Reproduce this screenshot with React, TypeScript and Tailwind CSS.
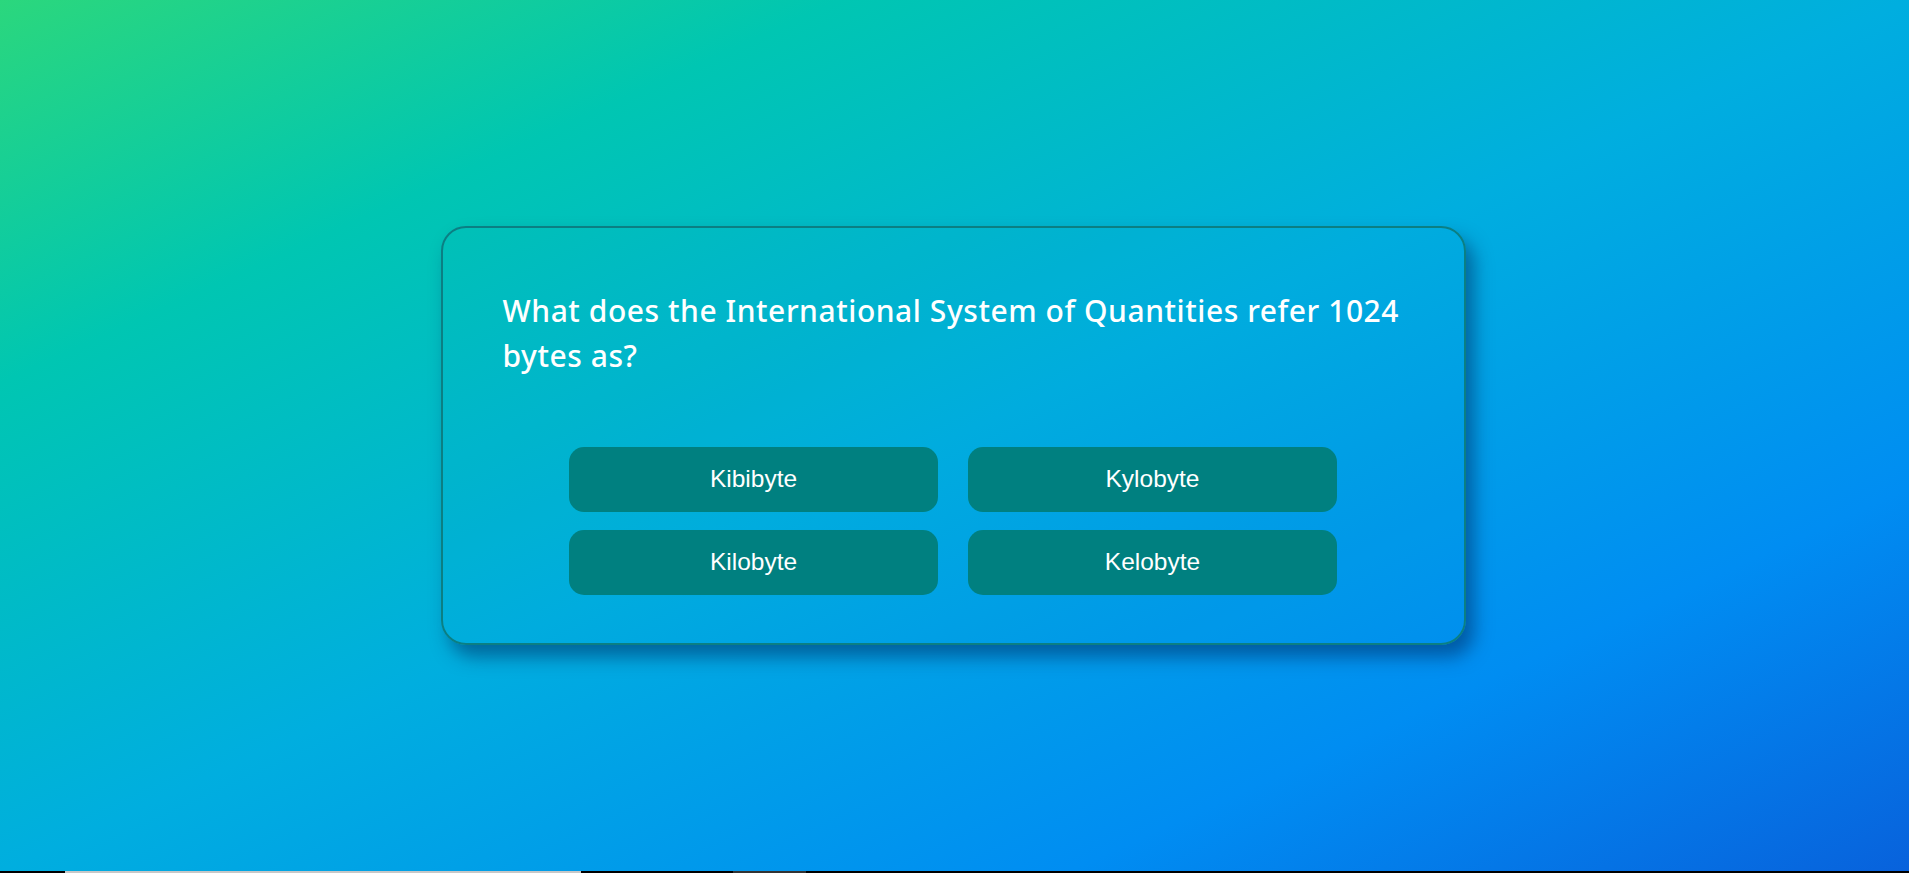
const answers = ['Kibibyte', 'Kylobyte', 'Kilobyte', 'Kelobyte']

export default function App() {
  return (
    <div className="w-full h-[873px] overflow-hidden flex flex-col">
      <main className="h-[871px] pr-[3px] flex items-center justify-center bg-[linear-gradient(to_bottom_right,#2bd77d_0%,#00c6b2_22%,#00aedf_50%,#008df2_78%,#0862dc_100%)]">
        {/* Quiz card */}
        <div className="w-[1025px] h-[419px] rounded-[25px] border-2 border-[#0b7f83] bg-[rgba(0,140,200,0.04)] px-[60px] pt-[60px] shadow-[8px_12px_18px_rgba(0,35,90,0.5)]">
          <h1 className="text-[30px] leading-[45px] font-medium text-white tracking-[0.55px] font-['Noto_Sans',sans-serif]">
            What does the International System of Quantities refer 1024 bytes as?
          </h1>

          <div className="w-[768px] mx-auto mt-[69px] grid grid-cols-2 gap-x-[30px] gap-y-[18px]">
            {answers.map((a) => (
              <button
                key={a}
                className="h-[65px] rounded-[15px] bg-[#008080] text-white text-[24.5px] font-['Liberation_Sans',Arial,sans-serif]"
              >
                {a}
              </button>
            ))}
          </div>
        </div>
      </main>

      {/* bottom strip */}
      <div className="h-[2px] bg-black flex">
        <div className="w-[65px]" />
        <div className="w-[516px] bg-[#c8c8c8]" />
        <div className="w-[152px]" />
        <div className="w-[73px] bg-[#333]" />
      </div>
    </div>
  )
}
